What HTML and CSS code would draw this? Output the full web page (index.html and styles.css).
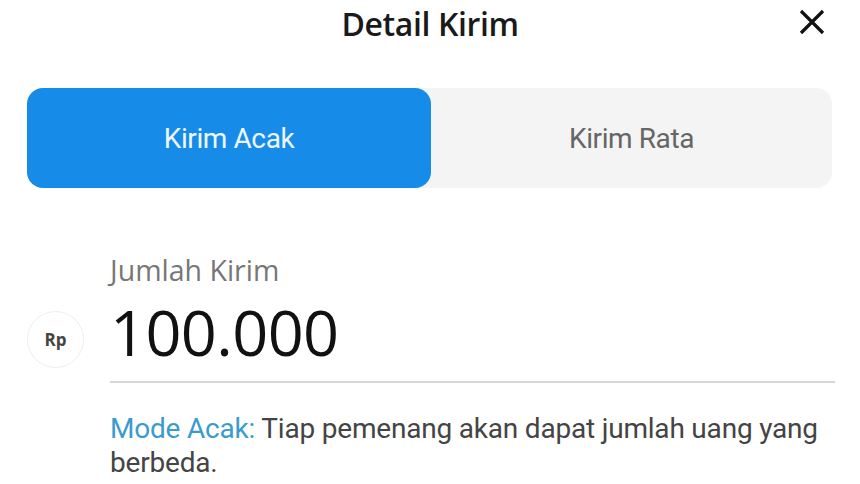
FILE: index.html
```html
<!DOCTYPE html>
<html lang="id">
<head>
  <meta charset="UTF-8" />
  <title>Detail Kirim</title>
  <link rel="stylesheet" href="styles.css">
</head>
<body>
  <div class="sheet">
    <!-- header -->
    <div class="sheet-header">
      <h1>Detail Kirim</h1>
      <button class="closeBtn" aria-label="Tutup">
        <svg width="26" height="26" viewBox="0 0 26 26">
          <path d="M2 2 L24 24 M24 2 L2 24" stroke="#111" stroke-width="3.2" stroke-linecap="butt" fill="none" />
        </svg>
      </button>
    </div>

    <!-- pilihan mode -->
    <div class="tabs">
      <div class="tab active">Kirim Acak</div>
      <div class="tab">Kirim Rata</div>
    </div>

    <!-- jumlah -->
    <div class="send-form">
      <div class="field-label">Jumlah Kirim</div>
      <div class="rp-badge">Rp</div>
      <div class="amount">100.000</div>
      <div class="divider"></div>
      <p class="note"><span class="note-mode">Mode Acak:</span> Tiap pemenang akan dapat jumlah uang yang berbeda.</p>
    </div>
  </div>
</body>
</html>
```

FILE: styles.css
```css
body {
  margin: 0;
  background: #fff;
  font-family: 'Open Sans', 'Noto Sans', sans-serif;
  color: #111;
  overflow: hidden;
}
.sheet {
  width: 860px;
  height: 484px;
}
.sheet-header {
  position: relative;
  height: 46px;
  display: flex;
  align-items: center;
  justify-content: center;
}
h1 {
  margin: 0;
  font-size: 32px;
  font-weight: 600;
  color: #1a1a1a;
  letter-spacing: -0.4px;
}
.closeBtn {
  position: absolute;
  right: 35px;
  top: 9px;
  padding: 0;
  border: none;
  background: none;
  cursor: pointer;
  line-height: 0;
}
/* tab mode */
.tabs {
  display: flex;
  margin: 42px 28px 0 27px;
  background: #f4f4f4;
  border-radius: 16px;
  height: 100px;
}
.tab {
  flex: 1;
  display: flex;
  align-items: center;
  justify-content: center;
  font-family: Roboto, sans-serif;
  font-size: 28px;
  color: #666;
  border-radius: 16px;
  letter-spacing: -0.4px;
}
.tab.active {
  flex: 0 0 404px;
  background: #168be8;
  color: #eef7ff;
}
/* form jumlah */
.send-form {
  display: grid;
  grid-template-columns: 83px 1fr;
  margin: 0 25px 0 27px;
  padding-top: 64px;
}
.field-label {
  grid-column: 2;
  font-size: 28.5px;
  color: #777;
  line-height: 36px;
}
.rp-badge {
  grid-column: 1;
  align-self: center;
  width: 55px;
  height: 55px;
  border: 1.5px solid #eee;
  border-radius: 50%;
  display: flex;
  align-items: center;
  justify-content: center;
  font-size: 17px;
  font-weight: 700;
  color: #444;
  margin-top: 20px;
}
.amount {
  grid-column: 2;
  margin-top: 5px;
  font-size: 63px;
  font-weight: 500;
  line-height: 78px;
  color: #111;
  letter-spacing: -0.6px;
}
.divider {
  grid-column: 2;
  height: 2px;
  background: #d6d6d6;
  margin-top: 10px;
}
.note {
  grid-column: 2;
  margin: 29px 0 0;
  font-family: Roboto, sans-serif;
  font-size: 28px;
  line-height: 34px;
  color: #444;
  letter-spacing: -0.2px;
}
.note-mode {
  color: #3a9bcf;
}
```
